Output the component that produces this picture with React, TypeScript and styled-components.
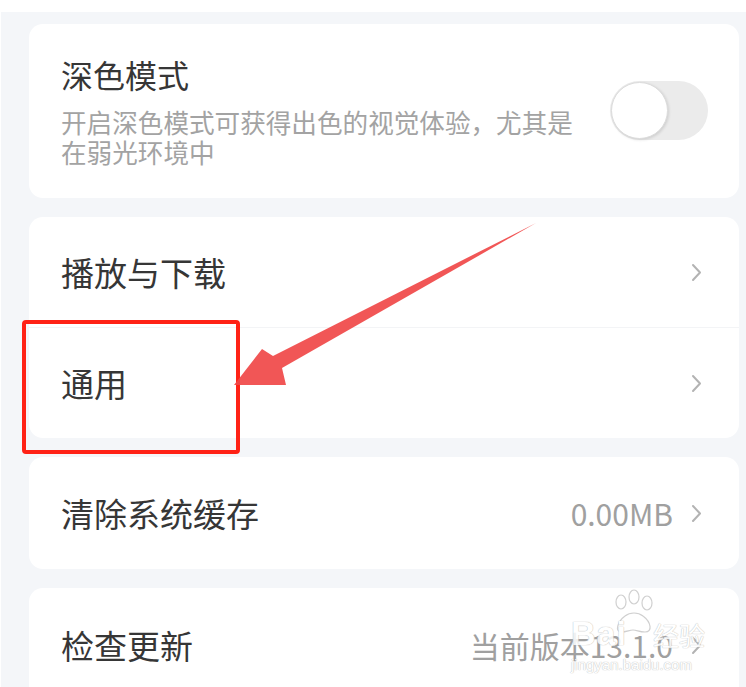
import React from 'react';
import styled, { createGlobalStyle } from 'styled-components';

const GlobalStyle = createGlobalStyle`
  html, body {
    margin: 0;
    padding: 0;
    background: #ffffff;
    overflow: hidden;
  }
  body {
    font-family: "Noto Sans CJK SC", "Noto Sans", sans-serif;
  }
`;

const Page = styled.div`
  position: relative;
  margin: 12px 0 0 1px;
  min-height: 700px;
  background: #f4f6f9;
  padding: 12px 7px 0 28px;
  display: flex;
  flex-direction: column;
  gap: 19px;
`;

const Card = styled.div`
  background: #ffffff;
  border-radius: 14px;
  overflow: hidden;
`;

const DarkRow = styled.div`
  display: flex;
  align-items: center;
  justify-content: space-between;
  padding: 29px 31px 31px 32px;
`;

const DarkText = styled.div`
  display: flex;
  flex-direction: column;
  gap: 12px;
`;

const Title = styled.div`
  font-size: 32px;
  line-height: 42px;
  color: #363636;
`;

const Desc = styled.div`
  width: 520px;
  font-size: 25.6px;
  line-height: 30px;
  color: #a3a3a3;
`;

const Toggle = styled.div`
  position: relative;
  width: 98px;
  height: 59px;
  border-radius: 30px;
  background: #ebebeb;
  flex-shrink: 0;
`;

const Knob = styled.div`
  position: absolute;
  left: 1px;
  top: 1px;
  width: 55px;
  height: 55px;
  border-radius: 50%;
  background: #ffffff;
  border: 1px solid #dcdcdc;
  box-shadow: 1px 1px 3px rgba(0, 0, 0, 0.12);
`;

const Row = styled.div<{ $divider?: boolean; $h?: number }>`
  display: flex;
  align-items: center;
  height: ${p => p.$h ?? 110}px;
  padding: 0 37px 0 32px;
  border-top: ${p => (p.$divider ? '1px solid #f3f4f6' : 'none')};
`;

const Label = styled.div`
  flex: 1;
  font-size: 33px;
  color: #363636;
`;

const Value = styled.div`
  font-size: 30px;
  color: #a0a0a0;
  margin-right: 18px;
`;

const Chevron = () => (
  <svg width="11" height="19" viewBox="0 0 11 19">
    <polyline points="2,2 9,9.5 2,17" fill="none" stroke="#b3b3b3" strokeWidth="2" strokeLinecap="round" strokeLinejoin="round" />
  </svg>
);

const Highlight = styled.div`
  position: absolute;
  left: 21px;
  top: 308px;
  width: 210px;
  height: 126px;
  border: 4px solid #ff2216;
  border-radius: 4px;
  pointer-events: none;
`;

const ArrowLayer = styled.svg`
  position: absolute;
  left: 0;
  top: -12px;
  pointer-events: none;
`;

const Watermark = styled.div`
  position: absolute;
  left: 570px;
  top: 576px;
  width: 140px;
  height: 90px;
  color: #ffffff;
  font-family: "Liberation Sans", sans-serif;
  text-shadow: 0 0 1px #bbb, 0 0 1px #bbb;
  opacity: 0.85;
  pointer-events: none;
`;

const WmBig = styled.div`
  position: absolute;
  left: 0;
  top: 26px;
  font-size: 34px;
  font-weight: bold;
  letter-spacing: 1px;
`;

const WmCn = styled.div`
  position: absolute;
  left: 82px;
  top: 28px;
  font-size: 26px;
  font-family: "Noto Sans CJK SC", sans-serif;
`;

const WmUrl = styled.div`
  position: absolute;
  left: 0;
  top: 68px;
  font-size: 15px;
`;

const Paw = () => (
  <svg width="52" height="52" viewBox="0 0 52 52" style={{ position: 'absolute', left: 36, top: 0 }}>
    <g fill="#fff" stroke="#c8c8c8" strokeWidth="1.2">
      <ellipse cx="14" cy="14" rx="5" ry="7" />
      <ellipse cx="27" cy="9" rx="5" ry="7" />
      <ellipse cx="40" cy="15" rx="5" ry="7" />
      <path d="M14 44 C8 44 10 34 18 28 C23 24 31 24 36 28 C44 34 46 44 38 44 C32 44 30 42 26 42 C22 42 20 44 14 44 Z" />
    </g>
  </svg>
);

export default function App() {
  return (
    <>
      <GlobalStyle />
      <Page>
        <Card>
          <DarkRow>
            <DarkText>
              <Title>深色模式</Title>
              <Desc>开启深色模式可获得出色的视觉体验，尤其是在弱光环境中</Desc>
            </DarkText>
            <Toggle>
              <Knob />
            </Toggle>
          </DarkRow>
        </Card>
        <Card>
          <Row>
            <Label>播放与下载</Label>
            <Chevron />
          </Row>
          <Row $divider>
            <Label>通用</Label>
            <Chevron />
          </Row>
        </Card>
        <Card>
          <Row $h={112}>
            <Label>清除系统缓存</Label>
            <Value>0.00MB</Value>
            <Chevron />
          </Row>
        </Card>
        <Card>
          <Row $h={114}>
            <Label>检查更新</Label>
            <Value>当前版本13.1.0</Value>
            <Chevron />
          </Row>
        </Card>
        <Highlight />
        <ArrowLayer width="746" height="700" viewBox="0 0 746 700">
          <polygon
            points="535,223 281,368 285,385 233,385 261,349 272,356"
            fill="#f04848"
            fillOpacity="0.92"
          />
        </ArrowLayer>
        <Watermark>
          <Paw />
          <WmBig>Bai</WmBig>
          <WmCn>经验</WmCn>
          <WmUrl>jingyan.baidu.com</WmUrl>
        </Watermark>
      </Page>
    </>
  );
}
